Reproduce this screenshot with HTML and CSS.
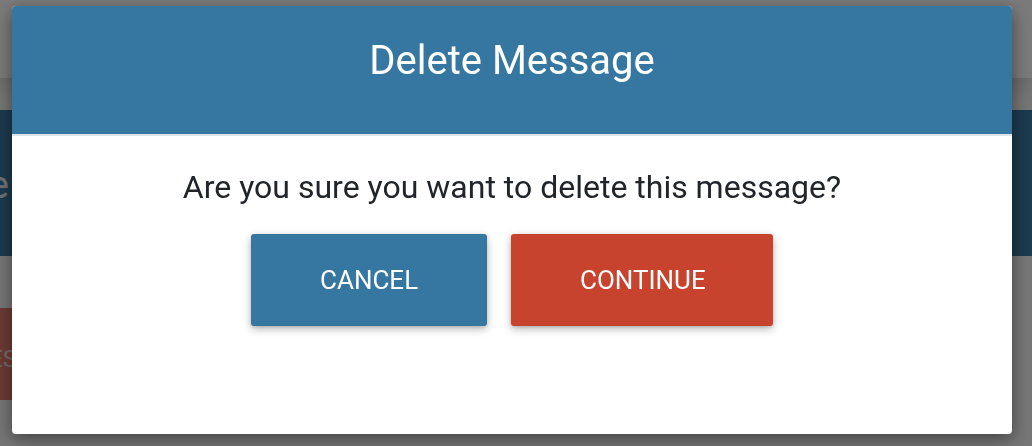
FILE: index.html
```html
<!DOCTYPE html>
<html lang="en">
<head>
<meta charset="utf-8">
<title>Delete Message</title>
<link rel="stylesheet" href="styles.css">
</head>
<body>
  <div class="page">
    <header class="topbar"></header>
    <section class="banner">
      <div class="banner-title"><span>Delete Message</span></div>
    </section>
    <div class="actions">
      <div class="ghost-btn"><span>DELETE MESSAGE</span></div>
    </div>
  </div>

  <div class="overlay">
    <div class="modal" role="dialog" aria-labelledby="modal-title">
      <div class="modal-header">
        <h2 id="modal-title" class="modal-title">Delete Message</h2>
      </div>
      <div class="modal-body">
        <p class="modal-text">Are you sure you want to delete this message?</p>
        <div class="modal-buttons">
          <button class="btn btn-cancel">CANCEL</button>
          <button class="btn btn-continue">CONTINUE</button>
        </div>
      </div>
    </div>
  </div>
</body>
</html>
```

FILE: styles.css
```css
* { box-sizing: border-box; }

html, body {
  margin: 0;
  padding: 0;
  width: 100%;
  height: 100%;
  overflow: hidden;
}

body {
  font-family: Roboto, "Liberation Sans", Arial, sans-serif;
  background: #f6f6f6;
}

.page {
  display: flex;
  flex-direction: column;
}

.topbar {
  height: 78px;
  background: #fefefe;
  box-shadow: 0 6px 24px rgba(0, 0, 0, 0.18);
  position: relative;
  z-index: 1;
}

.banner {
  margin-top: 32px;
  height: 146px;
  background: #3a7aa3;
  display: flex;
  align-items: center;
}

.banner-title {
  width: 9px;
  display: flex;
  justify-content: flex-end;
  white-space: nowrap;
  color: #e8eef3;
  font-size: 38px;
  margin-top: 4px;
}

.actions {
  margin-top: 52px;
  display: flex;
}

.ghost-btn {
  width: 200px;
  height: 92px;
  background: #e07a6c;
  display: flex;
  align-items: center;
  padding-top: 10px;
}

.ghost-btn span {
  display: block;
  white-space: nowrap;
  color: #f4dcd8;
  font-size: 24px;
  margin-left: -122px;
}

.overlay {
  position: fixed;
  inset: 0;
  background: rgba(0, 0, 0, 0.52);
  z-index: 10;
  display: flex;
  align-items: flex-start;
}

.modal {
  margin: 6px 20px 12px 12px;
  width: 1000px;
  height: 428px;
  background: #ffffff;
  border-radius: 4px;
  overflow: hidden;
  box-shadow: 0 5px 18px rgba(0, 0, 0, 0.45);
  display: flex;
  flex-direction: column;
}

.modal-header {
  height: 130px;
  flex: none;
  background: #3577a0;
  border-bottom: 2px solid #dde4eb;
  padding-top: 31px;
  text-align: center;
}

.modal-title {
  margin: 0;
  color: #ffffff;
  font-size: 40px;
  font-weight: 400;
  line-height: 48px;
}

.modal-body {
  padding-top: 33px;
  display: flex;
  flex-direction: column;
  align-items: center;
}

.modal-text {
  margin: 0;
  color: #212529;
  font-size: 32px;
  line-height: 36px;
}

.modal-buttons {
  margin-top: 29px;
  display: flex;
  gap: 24px;
}

.btn {
  height: 92px;
  padding: 0 69px;
  border: none;
  border-radius: 3px;
  color: #ffffff;
  font-family: Roboto, "Liberation Sans", Arial, sans-serif;
  font-size: 26px;
  font-weight: 400;
  box-shadow: 0 3px 8px rgba(0, 0, 0, 0.28), 0 1px 3px rgba(0, 0, 0, 0.12);
  cursor: pointer;
}

.btn-cancel {
  width: 236px;
  background: #3577a0;
}

.btn-continue {
  width: 262px;
  background: #c8432d;
}
```
